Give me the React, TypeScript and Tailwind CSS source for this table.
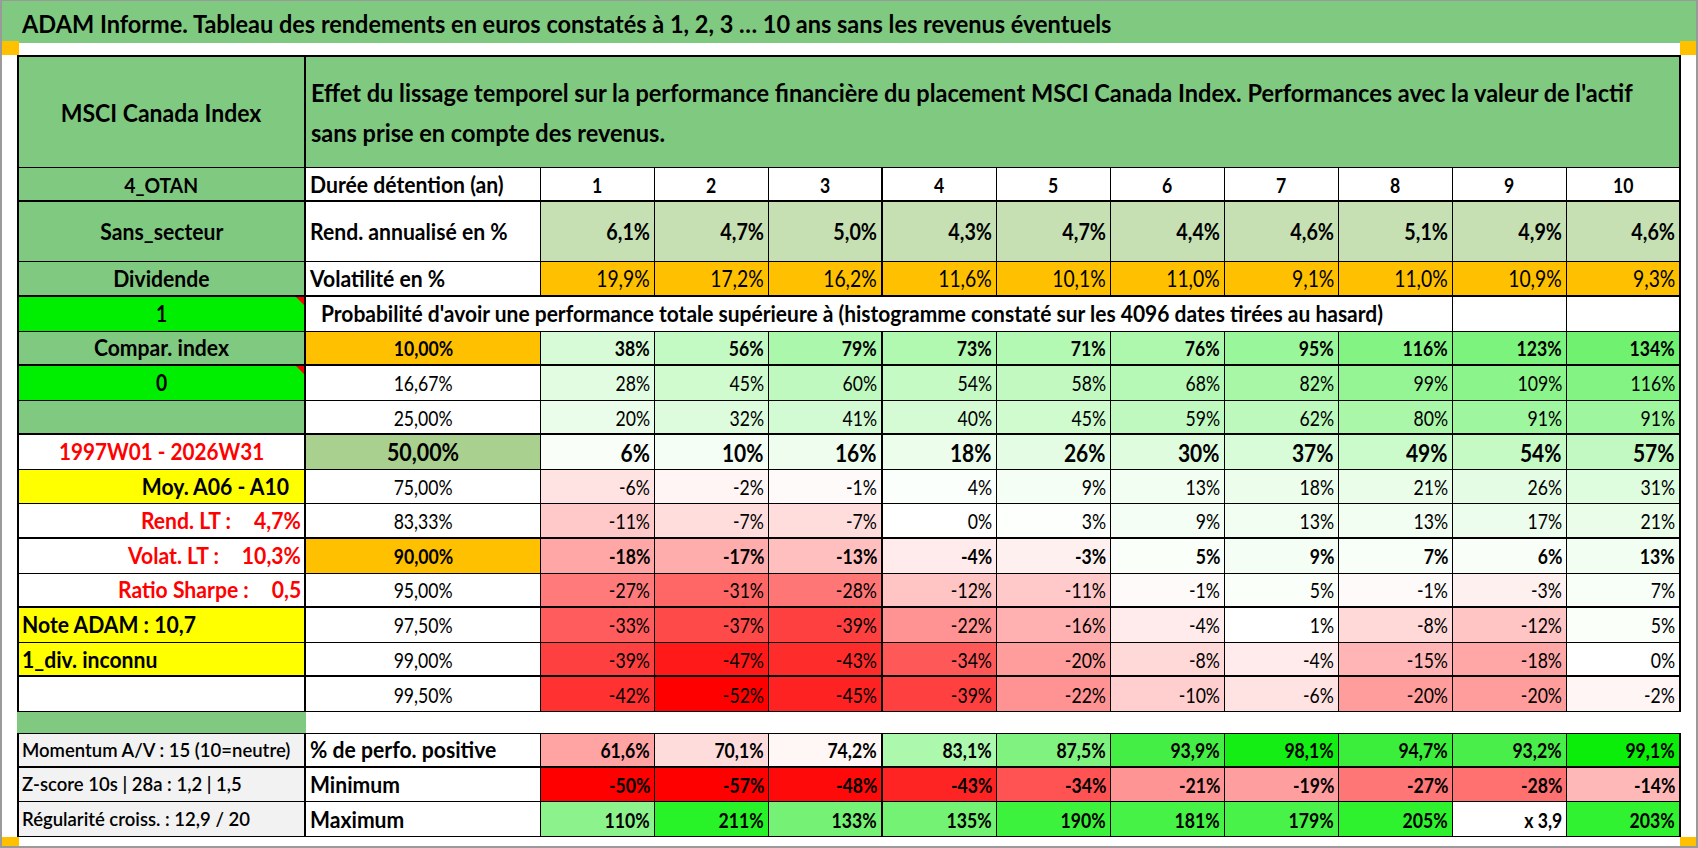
import React from 'react';
import clsx from 'clsx';

const THICK_B = new Set([1, 3, 5, 7, 10, 12, 14, 17]);
const bB = (r: number) => (THICK_B.has(r) ? 'border-b-2' : 'border-b');
const bR = (c: number) => (c === 0 || c === 4 || c === 11 ? 'border-r-2' : 'border-r');

type Align = 'l' | 'r' | 'c';
type Sc = 't' | 'n' | 'h' | 'ti' | 'p' | 'none';

/* Condensed text: the reference uses a narrow Calibri rendering */
function T({ a = 'l', s = 't', children }: { a?: Align; s?: Sc; children?: React.ReactNode }) {
  return (
    <span
      className={clsx(
        'inline-block shrink-0 whitespace-nowrap',
        s === 't' && 'scale-x-[0.92]',
        s === 'n' && 'scale-x-[0.84]',
        s === 'h' && 'scale-x-[0.98]',
        s === 'ti' && 'scale-x-[0.94]',
        s === 'p' && 'scale-x-[0.912]',
        a === 'l' && 'origin-left',
        a === 'r' && 'origin-right',
        a === 'c' && 'origin-center'
      )}
    >
      {children}
    </span>
  );
}

type CellProps = {
  r: number;
  c: number;
  span?: number;
  className?: string;
  style?: React.CSSProperties;
  children?: React.ReactNode;
};

function Cell({ r, c, span = 1, className, style, children }: CellProps) {
  return (
    <div
      className={clsx(
        'relative flex items-center min-w-0 whitespace-nowrap leading-none border-black text-black',
        bB(r),
        bR(c + span - 1),
        c === 0 && 'border-l-2',
        r === 0 && 'border-t-2',
        r === 17 && 'border-t',
        span === 11 && 'col-span-11',
        span === 9 && 'col-span-9',
        className
      )}
      style={style}
    >
      {children}
    </div>
  );
}

function Tri() {
  return (
    <span className="absolute top-0 right-0 w-0 h-0 border-l-[8px] border-l-transparent border-t-[8px] border-t-[#FF0000]" />
  );
}

function heat(v: number): string {
  if (v >= 0) {
    const t = Math.min(v / 134, 1);
    const r = Math.round(255 - (255 - 112) * t);
    const g = Math.round(255 - (255 - 242) * t);
    return `rgb(${r},${g},${r})`;
  }
  const t = Math.min(-v / 52, 1);
  const gb = Math.round(255 * (1 - t));
  return `rgb(255,${gb},${gb})`;
}

function minColor(v: number): string {
  const gb = Math.max(0, Math.min(255, Math.round(5.11 * (v + 50))));
  return `rgb(255,${gb},${gb})`;
}

function maxColor(v: number): string {
  const rb = Math.max(30, Math.min(150, Math.round(140 - (v - 110) * 0.99)));
  return `rgb(${rb},242,${rb})`;
}

const rend = ['6,1%', '4,7%', '5,0%', '4,3%', '4,7%', '4,4%', '4,6%', '5,1%', '4,9%', '4,6%'];
const vol = ['19,9%', '17,2%', '16,2%', '11,6%', '10,1%', '11,0%', '9,1%', '11,0%', '10,9%', '9,3%'];

type Kind = 'b' | 'r' | 'big';
const probRows: { label: string; kind: Kind; bg: string; vals: number[] }[] = [
  { label: '10,00%', kind: 'b', bg: 'bg-[#FFC000]', vals: [38, 56, 79, 73, 71, 76, 95, 116, 123, 134] },
  { label: '16,67%', kind: 'r', bg: 'bg-white', vals: [28, 45, 60, 54, 58, 68, 82, 99, 109, 116] },
  { label: '25,00%', kind: 'r', bg: 'bg-white', vals: [20, 32, 41, 40, 45, 59, 62, 80, 91, 91] },
  { label: '50,00%', kind: 'big', bg: 'bg-[#A9D08E]', vals: [6, 10, 16, 18, 26, 30, 37, 49, 54, 57] },
  { label: '75,00%', kind: 'r', bg: 'bg-white', vals: [-6, -2, -1, 4, 9, 13, 18, 21, 26, 31] },
  { label: '83,33%', kind: 'r', bg: 'bg-white', vals: [-11, -7, -7, 0, 3, 9, 13, 13, 17, 21] },
  { label: '90,00%', kind: 'b', bg: 'bg-[#FFC000]', vals: [-18, -17, -13, -4, -3, 5, 9, 7, 6, 13] },
  { label: '95,00%', kind: 'r', bg: 'bg-white', vals: [-27, -31, -28, -12, -11, -1, 5, -1, -3, 7] },
  { label: '97,50%', kind: 'r', bg: 'bg-white', vals: [-33, -37, -39, -22, -16, -4, 1, -8, -12, 5] },
  { label: '99,00%', kind: 'r', bg: 'bg-white', vals: [-39, -47, -43, -34, -20, -8, -4, -15, -18, 0] },
  { label: '99,50%', kind: 'r', bg: 'bg-white', vals: [-42, -52, -45, -39, -22, -10, -6, -20, -20, -2] },
];

const posVals = ['61,6%', '70,1%', '74,2%', '83,1%', '87,5%', '93,9%', '98,1%', '94,7%', '93,2%', '99,1%'];
const posCols = ['#FFA3A3', '#FFDCDC', '#FFF6F6', '#ACF8AC', '#80F280', '#45EE45', '#14EE14', '#3CEE3C', '#4AEE4A', '#0AEE0A'];
const minVals = [-50, -57, -48, -43, -34, -21, -19, -27, -28, -14];
const maxVals: (number | string)[] = [110, 211, 133, 135, 190, 181, 179, 205, 'x 3,9', 203];

const dataSize: Record<Kind, string> = {
  b: 'text-[21px] font-bold',
  r: 'text-[21px] font-normal',
  big: 'text-[25px] font-bold',
};
const secSize: Record<Kind, string> = {
  b: 'text-[21px] font-bold',
  r: 'text-[21px] font-normal',
  big: 'text-[25.5px] font-bold',
};

function leftCell(r: number): React.ReactNode {
  const green = 'bg-[#80C980] justify-center text-[23px] font-bold';
  const bright = 'bg-[#00EE00] justify-center text-[23px] font-bold';
  switch (r) {
    case 5:
      return (
        <Cell r={r} c={0} className={green}>
          <T a="c">Compar. index</T>
        </Cell>
      );
    case 6:
      return (
        <Cell r={r} c={0} className={bright}>
          <T a="c" s="n">0</T>
          <Tri />
        </Cell>
      );
    case 7:
      return <Cell r={r} c={0} className="bg-[#80C980]" />;
    case 8:
      return (
        <Cell r={r} c={0} className="bg-white justify-center text-[22.5px] font-bold">
          <T a="c">
            <span className="text-[#FF0000]">1997W01 - 2026W31</span>
          </T>
        </Cell>
      );
    case 9:
      return (
        <Cell r={r} c={0} className="bg-[#FFFF00] justify-end pr-[15px] text-[23px] font-bold">
          <T a="r">Moy. A06 - A10</T>
        </Cell>
      );
    case 10:
    case 11:
    case 12: {
      const pairs: Record<number, [string, string]> = {
        10: ['Rend. LT :', '4,7%'],
        11: ['Volat. LT :', '10,3%'],
        12: ['Ratio Sharpe :', '0,5'],
      };
      const [a, b] = pairs[r];
      return (
        <Cell r={r} c={0} className="bg-white justify-end pr-[3px] text-[23px] font-bold">
          <T a="r">
            <span className="inline-flex gap-[25px] text-[#FF0000]">
              <span>{a}</span>
              <span>{b}</span>
            </span>
          </T>
        </Cell>
      );
    }
    case 13:
      return (
        <Cell r={r} c={0} className="bg-[#FFFF00] pl-[3px] text-[23px] font-bold">
          <T>Note ADAM : 10,7</T>
        </Cell>
      );
    case 14:
      return (
        <Cell r={r} c={0} className="bg-[#FFFF00] pl-[3px] text-[23px] font-bold">
          <T>1_div. inconnu</T>
        </Cell>
      );
    default:
      return <Cell r={r} c={0} className="bg-white" />;
  }
}

export default function App() {
  const greenL = 'bg-[#80C980] justify-center text-[23px] font-bold';
  const secL = 'bg-white pl-[4px] text-[23px] font-bold';
  const botL = 'bg-[#F2F2F2] pl-[3px] text-[18.5px] font-semibold';

  return (
    <div className="w-[1698px] h-[848px] bg-white border-t border-l-2 border-r-2 border-b-2 border-[#9a9a9a] relative overflow-hidden font-['Lato','Liberation_Sans',Arial,sans-serif]">
      {/* Title */}
      <div className="h-[42px] bg-[#80C980] flex items-center pl-[20px] pt-[3px] text-[25px] font-bold text-black whitespace-nowrap leading-none">
        <T s="ti">ADAM Informe. Tableau des rendements en euros constatés à 1, 2, 3 … 10 ans sans les revenus éventuels</T>
      </div>
      <div className="h-[12px]" />

      {/* Table */}
      <div className="ml-[15px] w-[1664px] grid grid-cols-[289px_235px_repeat(10,114px)] grid-rows-[113px_34px_60px_35px_repeat(12,34.58px)_21px_repeat(3,34.67px)]">
        {/* Row 0 */}
        <Cell r={0} c={0} className="bg-[#80C980] justify-center text-[25px] font-bold">
          <T a="c">MSCI Canada Index</T>
        </Cell>
        <Cell r={0} c={1} span={11} className="bg-[#80C980] pl-[5px] text-[24px] font-bold">
          <T s="h">
            <span className="flex flex-col leading-[40px] pt-[2px]">
              <span>
                Effet du lissage temporel sur la performance financière du placement MSCI Canada Index. Performances avec la valeur de l'actif
              </span>
              <span>sans prise en compte des revenus.</span>
            </span>
          </T>
        </Cell>

        {/* Row 1 */}
        <Cell r={1} c={0} className="bg-[#80C980] justify-center text-[21px] font-bold">
          <T a="c">4_OTAN</T>
        </Cell>
        <Cell r={1} c={1} className={secL}>
          <T>Durée détention (an)</T>
        </Cell>
        {Array.from({ length: 10 }, (_, i) => (
          <Cell key={i} r={1} c={i + 2} className="bg-white justify-center text-[21px] font-bold">
            <T a="c" s="n">{i + 1}</T>
          </Cell>
        ))}

        {/* Row 2 */}
        <Cell r={2} c={0} className={greenL}>
          <T a="c">Sans_secteur</T>
        </Cell>
        <Cell r={2} c={1} className={secL}>
          <T>Rend. annualisé en %</T>
        </Cell>
        {rend.map((v, i) => (
          <Cell key={i} r={2} c={i + 2} className="bg-[#C6E0B4] justify-end pr-[4px] text-[23.5px] font-bold">
            <T a="r" s="n">{v}</T>
          </Cell>
        ))}

        {/* Row 3 */}
        <Cell r={3} c={0} className={greenL}>
          <T a="c">Dividende</T>
        </Cell>
        <Cell r={3} c={1} className={secL}>
          <T>Volatilité en %</T>
        </Cell>
        {vol.map((v, i) => (
          <Cell key={i} r={3} c={i + 2} className="bg-[#FFC000] justify-end pr-[4px] text-[23px] font-normal">
            <T a="r" s="n">{v}</T>
          </Cell>
        ))}

        {/* Row 4 */}
        <Cell r={4} c={0} className="bg-[#00EE00] justify-center text-[23px] font-bold">
          <T a="c" s="n">1</T>
          <Tri />
        </Cell>
        <Cell r={4} c={1} span={9} className="bg-white pl-[15px] text-[23px] font-bold">
          <T s="p">Probabilité d'avoir une performance totale supérieure à (histogramme constaté sur les 4096 dates tirées au hasard)</T>
        </Cell>
        <Cell r={4} c={10} className="bg-white" />
        <Cell r={4} c={11} className="bg-white" />

        {/* Rows 5-15 */}
        {probRows.map((row, k) => {
          const r = k + 5;
          return (
            <React.Fragment key={r}>
              {leftCell(r)}
              <Cell r={r} c={1} className={clsx(row.bg, 'justify-center', secSize[row.kind])}>
                <T a="c" s="n">{row.label}</T>
              </Cell>
              {row.vals.map((v, i) => (
                <Cell
                  key={i}
                  r={r}
                  c={i + 2}
                  className={clsx('justify-end pr-[4px]', dataSize[row.kind])}
                  style={{ backgroundColor: heat(v) }}
                >
                  <T a="r" s="n">{v}%</T>
                </Cell>
              ))}
            </React.Fragment>
          );
        })}

        {/* Row 16 spacer */}
        <div className="bg-[#80C980]" />
        <div className="col-span-11 bg-white" />

        {/* Row 17 */}
        <Cell r={17} c={0} className={botL}>
          <T s="none">Momentum A/V : 15 (10=neutre)</T>
        </Cell>
        <Cell r={17} c={1} className={secL}>
          <T>% de perfo. positive</T>
        </Cell>
        {posVals.map((v, i) => (
          <Cell
            key={i}
            r={17}
            c={i + 2}
            className="justify-end pr-[4px] text-[21px] font-bold"
            style={{ backgroundColor: posCols[i] }}
          >
            <T a="r" s="n">{v}</T>
          </Cell>
        ))}

        {/* Row 18 */}
        <Cell r={18} c={0} className={botL}>
          <T s="none">Z-score 10s | 28a : 1,2 | 1,5</T>
        </Cell>
        <Cell r={18} c={1} className={secL}>
          <T>Minimum</T>
        </Cell>
        {minVals.map((v, i) => (
          <Cell
            key={i}
            r={18}
            c={i + 2}
            className="justify-end pr-[4px] text-[21px] font-bold"
            style={{ backgroundColor: minColor(v) }}
          >
            <T a="r" s="n">{v}%</T>
          </Cell>
        ))}

        {/* Row 19 */}
        <Cell r={19} c={0} className={botL}>
          <T s="none">Régularité croiss. : 12,9 / 20</T>
        </Cell>
        <Cell r={19} c={1} className={secL}>
          <T>Maximum</T>
        </Cell>
        {maxVals.map((v, i) => (
          <Cell
            key={i}
            r={19}
            c={i + 2}
            className="justify-end pr-[4px] text-[21px] font-bold"
            style={{ backgroundColor: typeof v === 'number' ? maxColor(v) : '#ffffff' }}
          >
            <T a="r" s="n">{typeof v === 'number' ? `${v}%` : v}</T>
          </Cell>
        ))}
      </div>

      {/* Excel selection markers */}
      <div className="absolute left-[-2px] top-[40px] w-[19px] h-[14px] bg-[#FFC000]" />
      <div className="absolute left-[1678px] top-[40px] w-[18px] h-[14px] bg-[#FFC000]" />
      <div className="absolute left-[-2px] top-[836px] w-[19px] h-[10px] bg-[#FFC000]" />
      <div className="absolute left-[1678px] top-[836px] w-[18px] h-[10px] bg-[#FFC000]" />
    </div>
  );
}
